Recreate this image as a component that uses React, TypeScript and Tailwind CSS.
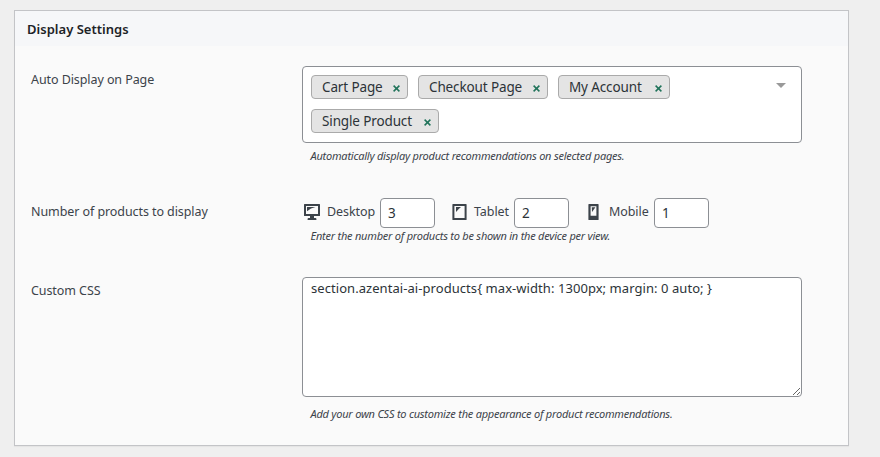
import React from 'react';

function Chip({ label, width }: { label: string; width: string }) {
  return (
    <li className={`flex h-6 items-center justify-between rounded-[4px] border border-[#aaa] bg-[#e4e4e4] pl-[10px] pr-[7px] ${width}`}>
      <span className="whitespace-nowrap text-[13.5px] leading-[22px] tracking-[-0.13px] text-[#2c3338]">{label}</span>
      <svg className="mt-[3px] h-[7px] w-[7px]" viewBox="0 0 7 7" fill="none" stroke="#20735a" strokeWidth="1.5">
        <path d="M.6.6 6.4 6.4M6.4.6.6 6.4" />
      </svg>
    </li>
  );
}

function Hint({ children, className }: { children: React.ReactNode; className: string }) {
  return <p className={`ml-[8.5px] whitespace-nowrap text-[11px] italic leading-4 tracking-[-0.23px] text-[#3c434a] ${className}`}>{children}</p>;
}

function NumberField({ value }: { value: string }) {
  return (
    <input
      readOnly
      value={value}
      className="h-[30px] w-[55px] rounded-[4px] border border-[#8c8f94] bg-white pl-[7px] text-[13.5px] text-[#2c3338] outline-none"
    />
  );
}

export default function App() {
  return (
    <div className="h-[457px] w-[880px] overflow-hidden bg-[#efefef] pl-[14px] pt-[10px] font-['Noto_Sans','Open_Sans',sans-serif] text-[12.5px] tracking-[-0.08px] text-[#3c434a]">
      <section className="h-[436px] w-[835px] border border-[#c3c4c7] bg-[#fafafa] shadow-[0_1px_1px_rgba(0,0,0,0.04)]">
        <h2 className="h-[35px] bg-[#f6f7f9] pl-3 text-[13px] font-semibold leading-[37px] tracking-[0.02px] text-[#1d2327]">Display Settings</h2>
        <div className="flex h-[132px] pl-4 pt-5">
          <div className="w-[271px] pt-[4px] leading-5">Auto Display on Page</div>
          <div>
            <div className="flex h-[77px] w-[500px] justify-between rounded-[4px] border border-[#8c8f94] bg-white pl-2 pr-[15px] pt-2">
              <ul className="flex w-[420px] flex-wrap content-start gap-x-[10px] gap-y-[10px]">
                <Chip label="Cart Page" width="w-[97px]" />
                <Chip label="Checkout Page" width="w-[130px]" />
                <Chip label="My Account" width="w-[112px]" />
                <Chip label="Single Product" width="w-[128px]" />
              </ul>
              <svg className="mt-2 h-[5px] w-[10px]" viewBox="0 0 10 5"><path d="M0 0h10L5 5Z" fill="#999" /></svg>
            </div>
            <Hint className="mt-[5px]">Automatically display product recommendations on selected pages.</Hint>
          </div>
        </div>
        <div className="flex h-[79px] pl-4 pt-5">
          <div className="w-[271px] pt-[4px] leading-5">Number of products to display</div>
          <div>
            <div className="flex h-[30px] items-center">
              <svg className="mb-[2px] ml-[2px] h-4 w-4" viewBox="0 0 16 16" fill="#3c434a">
                <path fillRule="evenodd" d="M.6 0h14.8q.6 0 .6.6v10.8q0 .6-.6.6H10v2h1.5q.9 0 .9.9V16H3.6v-1.1q0-.9.9-.9H6v-2H.6q-.6 0-.6-.6V.6Q0 0 .6 0ZM2 2v8h12V2Z" />
                <path d="M3 3h8.5L7 4.6 3 7.2Z" />
              </svg>
              <label className="w-[60px] pb-[2px] pl-[7px]">Desktop</label>
              <NumberField value="3" />
              <svg className="mb-[2px] ml-[17px] h-4 w-[15px]" viewBox="0 0 15 16" fill="#3c434a">
                <path fillRule="evenodd" d="M1 0h13q.6 0 .6.6v14.8q0 .6-.6.6H1q-.6 0-.6-.6V.6Q.4 0 1 0ZM2.4 2v12h10.2V2Z" />
                <path d="M4 3h5L7 4.8 4 8Z" />
              </svg>
              <label className="w-[47px] pb-[2px] pl-[7px]">Tablet</label>
              <NumberField value="2" />
              <svg className="mb-[2px] ml-[19px] h-4 w-[11px]" viewBox="0 0 11 16" fill="#3c434a">
                <path fillRule="evenodd" d="M1 0h9q.6 0 .6.6v14.8q0 .6-.6.6H1q-.6 0-.6-.6V.6Q.4 0 1 0ZM2.6 2.2v9.6h5.8V2.2Z" />
                <path d="M3.8 3.2h3.6L6 5.2 4 8Z" />
              </svg>
              <label className="w-[55px] pb-[2px] pl-[10px]">Mobile</label>
              <NumberField value="1" />
            </div>
            <Hint className="">Enter the number of products to be shown in the device per view.</Hint>
          </div>
        </div>
        <div className="flex pl-4 pt-5">
          <div className="w-[271px] pt-[4px] leading-5">Custom CSS</div>
          <div>
            <textarea
              readOnly
              defaultValue="section.azentai-ai-products{ max-width: 1300px; margin: 0 auto; }"
              className="block h-[120px] w-[500px] resize rounded-[4px] border border-[#8c8f94] bg-white px-2 py-[1px] text-[13px] leading-[18px] tracking-[0.06px] text-[#2c3338] outline-none"
            />
            <Hint className="mt-[9px]">Add your own CSS to customize the appearance of product recommendations.</Hint>
          </div>
        </div>
      </section>
    </div>
  );
}
